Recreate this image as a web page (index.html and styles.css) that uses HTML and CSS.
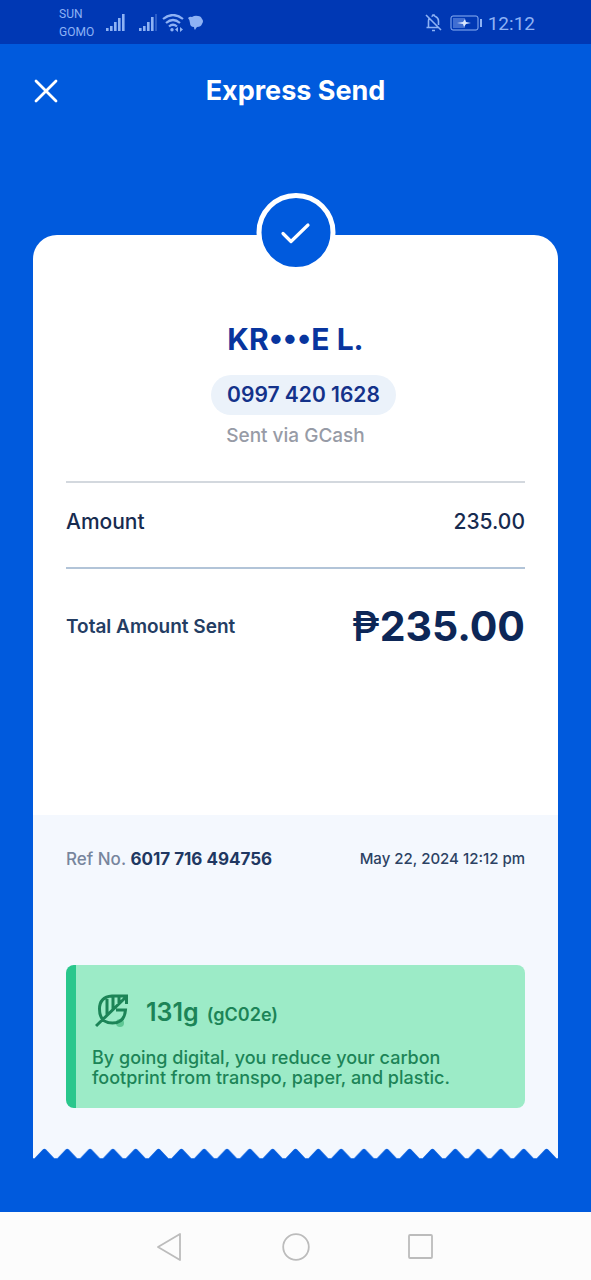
FILE: index.html
```html
<!DOCTYPE html>
<html lang="en">
<head>
<meta charset="utf-8">
<meta name="viewport" content="width=device-width, initial-scale=1">
<title>Express Send</title>
<link rel="stylesheet" href="styles.css">
</head>
<body>
<div class="screen">
  <div class="status">
    <div class="status-group">
      <div class="carriers"><span>SUN</span><span>GOMO</span></div>
      <svg class="signal" width="20" height="20" viewBox="0 0 20 20" fill="currentColor"><rect x="0" y="15" width="2.600" height="3"/><rect x="4" y="13" width="2.600" height="5"/><rect x="8" y="9" width="2.600" height="9"/><rect x="12" y="5" width="2.600" height="13"/><rect x="16" y="1" width="2.600" height="17"/></svg>
      <svg class="signal-two" width="20" height="20" viewBox="0 0 20 20" fill="currentColor"><rect x="1" y="15" width="2.600" height="3"/><rect x="5" y="13" width="2.600" height="5"/><rect x="9" y="9" width="2.600" height="9"/><rect x="13" y="4" width="2.600" height="14"/><rect x="17" y="1" width="2" height="17" opacity=".3"/></svg>
      <svg width="22" height="18" viewBox="0 0 22 18" fill="none" stroke="currentColor" stroke-width="2.200"><path d="M1 5Q11-3 21 5M4 9Q11 3 18 9M7 12.500Q11 9 15 12.500"/><circle cx="10" cy="15.800" r="1.700" fill="currentColor" stroke="none"/><path d="M13 15.500l3-2.500v5zM21 15.500l-3-2.500v5z" fill="currentColor" stroke="none"/></svg>
      <svg class="chat" width="16" height="17" viewBox="0 0 16 17" fill="currentColor"><path d="M0 3Q2 1 4 2 7 0 10 1q3 0 4 3 2 2 0 5-1 3-5 3-1 1-2 3-1-1-1-3-4 0-4-4 0-3-2-5z"/></svg>
    </div>
    <div class="status-group">
      <svg width="17" height="18" viewBox="0 0 17 18" fill="none" stroke="currentColor" stroke-width="1.600"><path d="M1 1l15 15M1.500 13.500h11.500M3.500 13.500V7q0-2 1-3M6.500 2.500Q8 2 8 1h1q0 1 1.500 1.500 3 1.500 3 4.500v4M7 16.500h3"/></svg>
      <svg class="battery" width="32" height="16" viewBox="0 0 32 16" fill="none" stroke="currentColor"><rect x="1" y="1" width="27" height="14" rx="2"/><rect x="3" y="3" width="12" height="10" fill="currentColor" stroke="none" opacity=".45"/><path d="M7 8l6-1 2-3 1 3 5 1-5 1-2 3-1-3z" fill="#dbe8ff" stroke="none"/><path d="M31 4v8" stroke-width="2"/></svg>
      <span class="clock">12:12</span>
    </div>
  </div>

  <header class="header">
    <button class="close" aria-label="Close"><svg width="24" height="24" viewBox="0 0 24 24" fill="none" stroke="currentColor" stroke-width="2.800" stroke-linecap="round"><path d="M2 2l20 20M22 2L2 22"/></svg></button>
    <h1>Express Send</h1>
  </header>

  <main class="receipt">
    <div class="badge"><svg width="30" height="22" viewBox="0 0 30 22" fill="none" stroke="currentColor" stroke-width="3.200" stroke-linecap="round" stroke-linejoin="round"><path d="M2.500 11.500l8 8L27.500 3"/></svg></div>
    <section class="details">
      <h2>KR•••E L.</h2>
      <p class="phone">0997 420 1628</p>
      <p class="via">Sent via GCash</p>
      <dl>
        <div class="row amount"><dt>Amount</dt><dd>235.00</dd></div>
        <div class="row total"><dt>Total Amount Sent</dt><dd><span class="peso">₱</span>235.00</dd></div>
      </dl>
    </section>
    <section class="reference">
      <div class="ref-row">
        <p class="ref">Ref No. <strong>6017 716 494756</strong></p>
        <time datetime="2024-05-22T12:12">May 22, 2024 12:12 pm</time>
      </div>
      <aside class="carbon">
        <div class="saved">
          <svg width="35" height="34" viewBox="0 0 35 34" fill="none" stroke="currentColor" stroke-width="3"><circle cx="25" cy="29" r="4" fill="#5fc795" stroke="none"/><path d="M1 32L31 3M31.500 10V2H17Q4.500 3 4.500 15q0 14 13 14 12 0 13-13H21M12 5v16M18 3v12M24 3v7"/></svg>
          <strong>131g</strong><span>(gC02e)</span>
        </div>
        <p>By going digital, you reduce your carbon footprint from transpo, paper, and plastic.</p>
      </aside>
    </section>
    <svg class="edge" viewBox="0 0 230 11" preserveAspectRatio="none" aria-hidden="true">
      <defs><pattern id="tooth" width="10" height="11" patternUnits="userSpaceOnUse"><path d="M0 0H10V10Q9.500 11 9 9.500L5.700 1.500Q5 .2 4.300 1.500L1 9.500Q.5 11 0 10Z" fill="#f4f8fe"/></pattern></defs>
      <rect width="230" height="11" fill="url(#tooth)"/>
    </svg>
  </main>

  <nav class="nav" aria-label="System">
    <button aria-label="Back"><svg width="28" height="28" viewBox="0 0 28 28" fill="none" stroke="currentColor" stroke-width="1.800" stroke-linejoin="round"><path d="M23 1v26L1 14z"/></svg></button>
    <button aria-label="Home"><svg width="28" height="28" viewBox="0 0 28 28" fill="none" stroke="currentColor" stroke-width="1.800"><circle cx="14" cy="14" r="12.800"/></svg></button>
    <button aria-label="Recent apps"><svg width="28" height="28" viewBox="0 0 28 28" fill="none" stroke="currentColor" stroke-width="1.800"><rect x="2" y="2" width="23" height="23" rx="1"/></svg></button>
  </nav>
</div>
</body>
</html>
```
FILE: styles.css
```css
* { box-sizing: border-box; }
body, h1, h2, p, dl, dd { margin: 0; }
body { font-family: Inter, "Liberation Sans", sans-serif; background: #005add; }
svg { display: block; }
button { border: 0; padding: 0; background: none; color: inherit; }
.screen { min-height: 100vh; display: flex; flex-direction: column; }

.status {
  display: flex; justify-content: space-between; align-items: center;
  height: 44px; padding: 2px 56px 0 59px;
  background: #0038b4; color: #8eb2f4;
  font-family: Roboto, sans-serif;
}
.status-group { display: flex; align-items: center; }
.carriers { display: flex; flex-direction: column; width: 47px; font-size: 12px; line-height: 18px; }
.signal-two { margin: 0 4px 0 12px; }
.chat { margin-left: 4px; }
.battery { margin: 0 6px 0 8px; }
.clock { font-size: 19px; }

.header {
  display: grid; grid-template-columns: 24px 1fr 24px; align-items: center;
  padding: 0 34px; height: 94px; color: #fff;
}
.header h1 { text-align: center; font-size: 27px; line-height: 32px; font-weight: 700; }

.receipt { position: relative; margin: 97px 33px 53px; flex: 1; display: flex; flex-direction: column; }
.badge {
  position: absolute; top: -42px; left: 50%; transform: translateX(-50%);
  display: grid; place-items: center; width: 79px; height: 79px;
  border: 5px solid #fff; border-radius: 50%; background: #005add; color: #fff;
}
.details {
  display: flex; flex-direction: column; align-items: center;
  min-height: 580px; padding: 88px 33px 0;
  background: #fff; border-radius: 24px 24px 0 0;
}
h2 { font-size: 30px; line-height: 32px; font-weight: 700; color: #08359e; }
.phone {
  margin: 20px 0 8px 16px; padding: 4px 16px; border-radius: 20px;
  background: #ebf2fa; color: #14328a;
  font-size: 21px; line-height: 32px; font-weight: 600;
}
.via { font-size: 19px; line-height: 26px; font-weight: 500; color: #979ba6; }
dl { align-self: stretch; margin-top: 32px; color: #172b50; }
.row { display: flex; justify-content: space-between; align-items: center; border-top: 2px solid #d3d8de; }
.amount { height: 86px; padding-bottom: 8px; font-size: 21px; font-weight: 500; }
.total { height: 116px; border-color: #b2c4d8; }
.total dt { font-size: 19px; font-weight: 600; color: #243d63; }
.total dd { font-size: 41px; line-height: 48px; font-weight: 700; color: #0d2757; }
.peso { font-weight: 500; }

.reference { flex: 1; padding: 32px 33px 40px; background: #f4f8fe; }
.ref-row { display: flex; justify-content: space-between; align-items: center; line-height: 24px; font-size: 17px; }
.ref { color: #77859d; font-weight: 500; }
.ref strong { color: #203761; }
time { font-size: 15px; color: #2c4263; font-weight: 500; }
.carbon {
  margin-top: 94px; padding: 28px 16px 20px; min-height: 143px;
  border-left: 10px solid #29c78c; border-radius: 8px;
  background: #9cebc7; color: #1c8457;
}
.saved { display: flex; align-items: baseline; gap: 8px; padding-left: 3px; height: 36px; }
.saved svg { align-self: center; margin-right: 8px; }
.saved strong { font-size: 25px; line-height: 38px; font-weight: 600; }
.saved span { font-size: 18px; font-weight: 600; }
.carbon p { margin-top: 19px; font-size: 18px; line-height: 20px; font-weight: 500; }
.edge { width: 100%; height: 11px; }

.nav {
  display: flex; justify-content: center; gap: 97px; align-items: center;
  height: 69px; background: #fcfcfc; color: #bcbcbc;
}
```
